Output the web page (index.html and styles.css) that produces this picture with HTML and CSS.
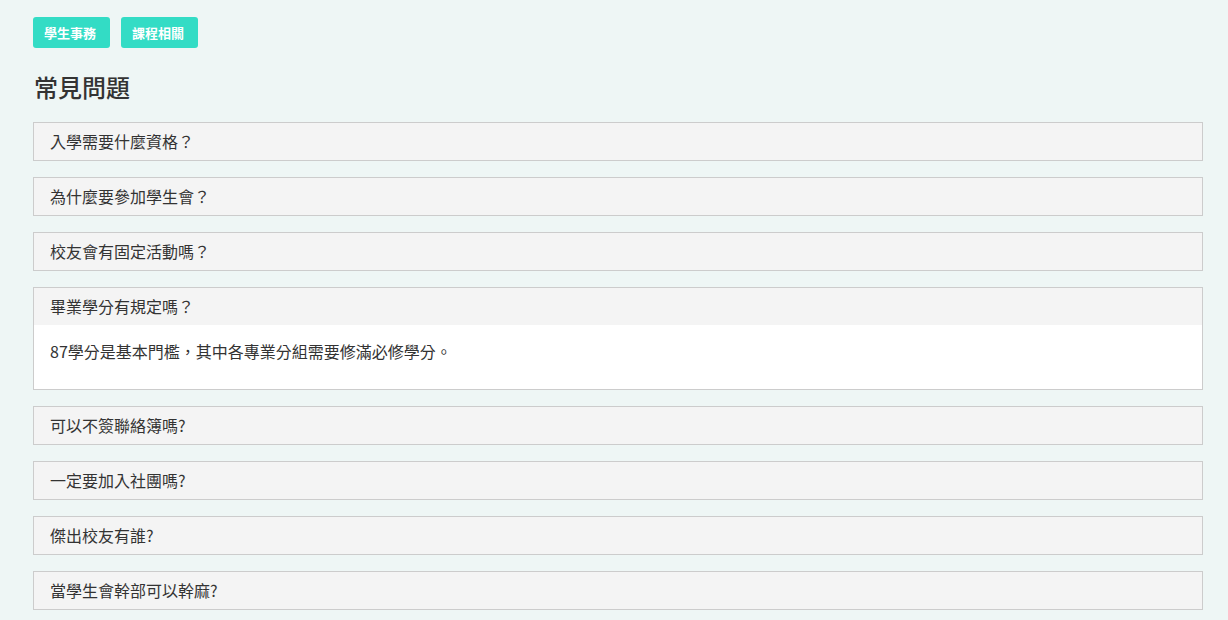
FILE: index.html
```html
<!DOCTYPE html>
<html lang="zh-Hant">
<head>
    <meta charset="UTF-8">
    <meta name="viewport" content="width=device-width, initial-scale=1.0">
    <title>常見問題</title>
    <link rel="stylesheet" href="styles.css">
</head>
<body>
    <div class="page">
        <div class="tabs">
            <button type="button" class="tab">學生事務</button>
            <button type="button" class="tab">課程相關</button>
        </div>

        <h2>常見問題</h2>

        <div class="faq">
            <div class="item">
                <div class="question">入學需要什麼資格？</div>
            </div>
            <div class="item">
                <div class="question">為什麼要參加學生會？</div>
            </div>
            <div class="item">
                <div class="question">校友會有固定活動嗎？</div>
            </div>
            <div class="item open">
                <div class="question">畢業學分有規定嗎？</div>
                <div class="answer">87學分是基本門檻，其中各專業分組需要修滿必修學分。</div>
            </div>
            <div class="item">
                <div class="question">可以不簽聯絡簿嗎?</div>
            </div>
            <div class="item">
                <div class="question">一定要加入社團嗎?</div>
            </div>
            <div class="item">
                <div class="question">傑出校友有誰?</div>
            </div>
            <div class="item">
                <div class="question">當學生會幹部可以幹麻?</div>
            </div>
        </div>
    </div>
</body>
</html>
```

FILE: styles.css
```css
body {
    margin: 0;
    background-color: #eef6f5;
    font-family: "Noto Sans CJK TC", "Noto Sans", sans-serif;
    color: #333;
}

.page {
    padding: 17px 25px 20px 33px;
}

.tabs {
    display: flex;
    gap: 11px;
}

.tab {
    width: 77px;
    height: 31px;
    padding: 0 3px 0 0;
    border: none;
    border-radius: 3px;
    background-color: #33dcc5;
    color: #fff;
    font-family: inherit;
    font-size: 13px;
    font-weight: bold;
    cursor: pointer;
}

h2 {
    margin: 23px 0 19px 1px;
    font-size: 24px;
    font-weight: 500;
    line-height: 32px;
    color: #333;
}

.faq {
    display: flex;
    flex-direction: column;
    gap: 16px;
}

.item {
    border: 1px solid #ccc;
    background-color: #fff;
}

.question {
    background-color: #f4f4f4;
    padding: 8px 16px;
    font-size: 16px;
    line-height: 21px;
}

.answer {
    padding: 15px 16px 27px;
    font-size: 16px;
    line-height: 22px;
}
```
